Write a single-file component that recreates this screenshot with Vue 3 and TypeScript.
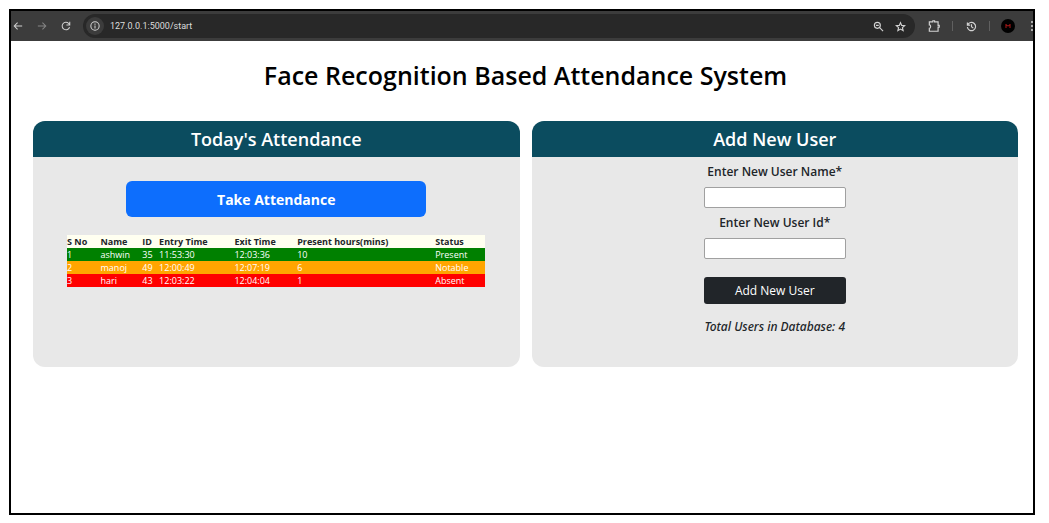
<script setup lang="ts">
import { ref } from 'vue'

interface AttendanceRow {
  name: string
  id: number
  entry: string
  exit: string
  minutes: number
  status: 'Present' | 'Notable' | 'Absent'
}

const rows: AttendanceRow[] = [
  { name: 'ashwin', id: 35, entry: '11:53:30', exit: '12:03:36', minutes: 10, status: 'Present' },
  { name: 'manoj', id: 49, entry: '12:00:49', exit: '12:07:19', minutes: 6, status: 'Notable' },
  { name: 'hari', id: 43, entry: '12:03:22', exit: '12:04:04', minutes: 1, status: 'Absent' },
]

const totalUsers = 4
const userName = ref('')
const userId = ref('')
</script>

<template>
  <div class="frame">
    <header class="toolbar">
      <button class="tool nav" type="button" aria-label="Back">
        <svg viewBox="0 0 24 24"><path d="M22 12H4M11 4l-8 8 8 8" /></svg>
      </button>
      <button class="tool nav dim" type="button" aria-label="Forward">
        <svg viewBox="0 0 24 24"><path d="M2 12h18M13 4l8 8-8 8" /></svg>
      </button>
      <button class="tool nav" type="button" aria-label="Reload">
        <svg viewBox="0 0 24 24"><path d="M20.500 14.500A9 9 0 1 1 18.500 6L21 9M21 2v7.500h-8" /></svg>
      </button>
      <div class="address">
        <button class="info" type="button" aria-label="Site information">
          <svg viewBox="0 0 24 24"><circle cx="12" cy="12" r="10" /><path d="M12 11v7M12 6v3" /></svg>
        </button>
        <span class="url">127.0.0.1:5000/start</span>
        <button class="tool" type="button" aria-label="Zoom">
          <svg viewBox="0 0 24 24"><circle cx="9.500" cy="9.500" r="6.500" /><path d="M14.500 14.500L22 22M6.500 9.500h6" /></svg>
        </button>
        <button class="tool" type="button" aria-label="Bookmark">
          <svg viewBox="0 0 24 24"><path d="M12 3.500l2.600 6 6.600.6-5 4.400 1.500 6.500-5.700-3.400-5.700 3.400 1.500-6.500-5-4.400 6.600-.6z" /></svg>
        </button>
      </div>
      <button class="tool" type="button" aria-label="Extensions">
        <svg class="large" viewBox="0 0 24 24"><path d="M4 5h6V3h3v2h6v6h2v3h-2v7H4v-5c3 0 3-6 0-6z" /></svg>
      </button>
      <span class="divider"></span>
      <button class="tool" type="button" aria-label="History">
        <svg viewBox="0 0 24 24"><path d="M3 3v6h6M3.500 9A9 9 0 1 1 3 13M12 7v5.500l4 3" /></svg>
      </button>
      <span class="divider"></span>
      <button class="avatar" type="button" aria-label="Profile">
        <svg viewBox="0 0 14 14"><path d="M5 5v4M9 5v4M5 6l2 1 2-1" /></svg>
      </button>
      <button class="menu" type="button" aria-label="Menu">
        <svg viewBox="0 0 4 12"><circle cx="3" cy="2" r="1" /><circle cx="3" cy="6" r="1" /><circle cx="3" cy="10" r="1" /></svg>
      </button>
    </header>

    <main>
      <h1>Face Recognition Based Attendance System</h1>
      <div class="panels">
        <section class="panel">
          <h2>Today's Attendance</h2>
          <button class="take" type="button">Take Attendance</button>
          <table>
            <colgroup>
              <col class="c-no" /><col class="c-name" /><col class="c-id" /><col class="c-entry" />
              <col class="c-exit" /><col class="c-hours" /><col class="c-status" />
            </colgroup>
            <thead>
              <tr>
                <th>S No</th>
                <th>Name</th>
                <th>ID</th>
                <th>Entry Time</th>
                <th>Exit Time</th>
                <th>Present hours(mins)</th>
                <th>Status</th>
              </tr>
            </thead>
            <tbody>
              <tr v-for="(row, i) in rows" :key="row.id" :class="row.status.toLowerCase()">
                <td>{{ i + 1 }}</td>
                <td>{{ row.name }}</td>
                <td>{{ row.id }}</td>
                <td>{{ row.entry }}</td>
                <td>{{ row.exit }}</td>
                <td>{{ row.minutes }}</td>
                <td>{{ row.status }}</td>
              </tr>
            </tbody>
          </table>
        </section>

        <section class="panel">
          <h2>Add New User</h2>
          <form @submit.prevent>
            <label for="user-name">Enter New User Name*</label>
            <input id="user-name" v-model="userName" type="text" />
            <label for="user-id">Enter New User Id*</label>
            <input id="user-id" v-model="userId" type="text" />
            <button class="add" type="submit">Add New User</button>
            <p>Total Users in Database: {{ totalUsers }}</p>
          </form>
        </section>
      </div>
    </main>
  </div>
</template>

<style>
body {
  background: #fff;
}
</style>

<style scoped>
* {
  box-sizing: border-box;
}
.frame {
  margin: 9px 14px 8px 9px;
  min-height: calc(100vh - 17px);
  border: 2px solid #000;
  overflow: hidden;
  font-family: "Open Sans", "Noto Sans", sans-serif;
  color: #212529;
}
button {
  font-family: inherit;
  border: 0;
  padding: 0;
  cursor: pointer;
}
.toolbar {
  display: flex;
  align-items: center;
  height: 30px;
  background: #3c3c3c;
}
.toolbar svg {
  display: block;
  width: 11px;
  height: 11px;
  fill: none;
  stroke: #d2d2d2;
  stroke-width: 2.5;
}
.toolbar svg.large {
  width: 14px;
  height: 14px;
  stroke-width: 2;
}
.tool {
  display: flex;
  justify-content: center;
  flex: none;
  width: 14px;
  margin-right: 11px;
  background: none;
}
.nav {
  margin-right: 10px;
}
.toolbar .nav svg {
  width: 10px;
  height: 10px;
}
.toolbar .dim svg {
  stroke: #858585;
}
.address {
  display: flex;
  align-items: center;
  flex: 1;
  height: 24px;
  margin-right: 12px;
  padding-left: 3px;
  border-radius: 12px;
  background: #282828;
}
.address .tool {
  margin-right: 8px;
}
.info {
  display: grid;
  place-items: center;
  width: 18px;
  height: 18px;
  border-radius: 50%;
  background: #3c3c3c;
}
.toolbar .info svg {
  width: 10px;
  height: 10px;
}
.url {
  flex: 1;
  margin-left: 6px;
  font: 9px/16px Roboto, "Noto Sans", sans-serif;
  color: #dcdcdc;
}
.divider {
  width: 1px;
  height: 10px;
  margin-right: 11px;
  background: #606060;
}
.avatar {
  width: 14px;
  height: 14px;
  margin-right: 14px;
  border-radius: 50%;
  background: #000;
}
.toolbar .avatar svg {
  width: 14px;
  height: 14px;
  stroke: #b01818;
  stroke-width: 1;
}
.menu {
  background: none;
}
.toolbar .menu svg {
  width: 4px;
  height: 12px;
  fill: #d2d2d2;
  stroke: none;
}
main {
  padding: 16px 15px 16px 22px;
}
h1 {
  margin: 0 0 28px;
  font-size: 25px;
  line-height: 36px;
  font-weight: 600;
  text-align: center;
  color: #000;
}
.panels {
  display: grid;
  grid-template-columns: 1fr 1fr;
  gap: 12px;
}
.panel {
  min-height: 246px;
  border-radius: 12px;
  overflow: hidden;
  background: #e8e8e8;
}
h2 {
  margin: 0;
  background: #0b4c5f;
  color: #fff;
  font-size: 18px;
  line-height: 36px;
  font-weight: 600;
  text-align: center;
}
.take {
  display: block;
  width: 300px;
  height: 36px;
  margin: 24px auto 18px;
  border-radius: 6px;
  background: #0d6efd;
  color: #fff;
  font-size: 14px;
  font-weight: 700;
}
table {
  width: 86%;
  margin: 0 auto;
  table-layout: fixed;
  border-collapse: collapse;
  font-size: 9px;
  line-height: 13px;
  text-align: left;
  white-space: nowrap;
}
th,
td {
  padding: 0;
}
th {
  background: #fffff0;
  font-weight: 700;
}
td {
  color: #fff;
}
.c-no { width: 8%; }
.c-name { width: 10%; }
.c-id { width: 4%; }
.c-entry { width: 18%; }
.c-exit { width: 15%; }
.c-hours { width: 33%; }
.c-status { width: 12%; }
.present { background: #008000; }
.notable { background: #ffa500; }
.absent { background: #f00; }
form {
  display: flex;
  flex-direction: column;
  align-items: center;
  padding: 6px 0;
}
label {
  margin-bottom: 6px;
  font-size: 12px;
  line-height: 18px;
  font-weight: 600;
}
input {
  width: 142px;
  height: 21px;
  margin-bottom: 6px;
  padding: 1px 4px;
  border: 1px solid #a0a0a0;
  border-radius: 2px;
  background: #fff;
  font: 12px "Open Sans", sans-serif;
}
.add {
  width: 142px;
  height: 27px;
  margin-top: 12px;
  border-radius: 3px;
  background: #212529;
  color: #fff;
  font-size: 12px;
}
p {
  margin: 14px 0 0;
  font-family: "Noto Sans", "Open Sans", sans-serif;
  font-size: 12px;
  line-height: 18px;
  font-style: italic;
  font-weight: 500;
}
</style>
